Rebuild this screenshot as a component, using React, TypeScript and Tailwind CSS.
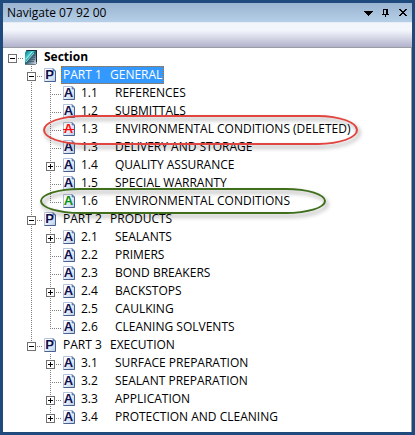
import { useState } from "react";
import clsx from "clsx";

type Kind = "section" | "part" | "article" | "deleted" | "added";

type TreeItem = {
	id: string;
	number?: string;
	title: string;
	kind: Kind;
	expandable?: boolean;
	children?: TreeItem[];
};

const article = (id: string, number: string, title: string, expandable = false, kind: Kind = "article"): TreeItem => ({
	id,
	number,
	title,
	kind,
	expandable,
});

const tree: TreeItem = {
	id: "section",
	title: "Section",
	kind: "section",
	expandable: true,
	children: [
		{
			id: "part-1",
			number: "PART 1",
			title: "GENERAL",
			kind: "part",
			expandable: true,
			children: [
				article("1-1", "1.1", "REFERENCES"),
				article("1-2", "1.2", "SUBMITTALS"),
				article("1-3-old", "1.3", "ENVIRONMENTAL CONDITIONS (DELETED)", false, "deleted"),
				article("1-3", "1.3", "DELIVERY AND STORAGE"),
				article("1-4", "1.4", "QUALITY ASSURANCE", true),
				article("1-5", "1.5", "SPECIAL WARRANTY"),
				article("1-6", "1.6", "ENVIRONMENTAL CONDITIONS", false, "added"),
			],
		},
		{
			id: "part-2",
			number: "PART 2",
			title: "PRODUCTS",
			kind: "part",
			expandable: true,
			children: [
				article("2-1", "2.1", "SEALANTS", true),
				article("2-2", "2.2", "PRIMERS"),
				article("2-3", "2.3", "BOND BREAKERS"),
				article("2-4", "2.4", "BACKSTOPS", true),
				article("2-5", "2.5", "CAULKING"),
				article("2-6", "2.6", "CLEANING SOLVENTS"),
			],
		},
		{
			id: "part-3",
			number: "PART 3",
			title: "EXECUTION",
			kind: "part",
			expandable: true,
			children: [
				article("3-1", "3.1", "SURFACE PREPARATION", true),
				article("3-2", "3.2", "SEALANT PREPARATION"),
				article("3-3", "3.3", "APPLICATION", true),
				article("3-4", "3.4", "PROTECTION AND CLEANING", true),
			],
		},
	],
};

// Vertical guide that runs past a row for an ancestor with more siblings
function Guide({ visible }: { visible: boolean }) {
	return (
		<svg width="19" height="18" className="shrink-0" shapeRendering="crispEdges" aria-hidden="true">
			{visible && <path d="M9.5 0V18" stroke="#808080" strokeDasharray="1 1" />}
		</svg>
	);
}

type BranchProps = { root: boolean; last: boolean; box?: "plus" | "minus" };

function Branch({ root, last, box }: BranchProps) {
	return (
		<svg width="22" height="18" className="block shrink-0" fill="none" shapeRendering="crispEdges" aria-hidden="true">
			{!root && <path d={last ? "M9.5 0V10" : "M9.5 0V18"} stroke="#808080" strokeDasharray="1 1" />}
			<path d="M9 10.5H21" stroke="#808080" strokeDasharray="1 1" />
			{box && (
				<>
					<rect x="5.5" y="6.5" width="8" height="8" fill="#fff" stroke="#707070" />
					<path d="M7 10.5H12" stroke="#000" />
					{box === "plus" && <path d="M9.5 8V13" stroke="#000" />}
				</>
			)}
		</svg>
	);
}

function SectionIcon() {
	return (
		<svg width="13" height="16" viewBox="0 0 13 16" className="shrink-0" aria-hidden="true">
			<defs>
				<linearGradient id="section-cover" x1="0" y1="0" x2="1" y2="1">
					<stop offset="0.1" stopColor="#0f7f8c" />
					<stop offset="0.38" stopColor="#4fd8d8" />
					<stop offset="0.5" stopColor="#1f5f74" />
					<stop offset="0.75" stopColor="#8fa3b4" />
					<stop offset="1" stopColor="#e3eaf1" />
				</linearGradient>
			</defs>
			<path d="M1.5 1H12V14L10 15H0V4Z" fill="url(#section-cover)" />
			<path d="M1.5 1.5H11.5V13.5" fill="none" stroke="#1c2a33" />
			<path d="M0 15.5H10.5L12 14" fill="none" stroke="#6c7884" />
			<path d="M7 6.5H10M5 8.5H10M4 10.5H10M2 12.5H9" stroke="#43586a" strokeWidth="0.8" />
			<path d="M1 10L7 3M1 13L9 4" stroke="#b4f2ee" strokeWidth="0.8" />
		</svg>
	);
}

const letterColors: Record<Kind, string> = {
	section: "#10104f",
	part: "#10104f",
	article: "#10104f",
	deleted: "#ff0c0c",
	added: "#0a9014",
};

function PageIcon({ kind }: { kind: Kind }) {
	return (
		<svg width="13" height="18" viewBox="0 -1 13 18" className="shrink-0 overflow-visible" aria-hidden="true">
			<defs>
				<linearGradient id={`page-${kind}`} x1="0" y1="0" x2="1" y2="1">
					<stop offset="0.3" stopColor="#fff" />
					<stop offset="1" stopColor="#b4c8ea" />
				</linearGradient>
			</defs>
			<path d="M.5 1.5H9L11.5 4V14.5H.5Z" fill={`url(#page-${kind})`} stroke="#b3c3df" />
			<path d="M11.5 4V14.5H.5" fill="none" stroke="#49618f" />
			<path d="M9 1.5V4H11.5Z" fill="#6d88b8" stroke="#5570a0" strokeWidth="0.6" />
			<text
				x="5.5"
				y="12"
				textAnchor="middle"
				fontSize="13"
				fontFamily="Liberation Sans, sans-serif"
				fontWeight={700}
				fill={letterColors[kind]}
			>
				{kind === "part" ? "P" : "A"}
			</text>
			{kind === "deleted" && <path d="M0 8.5H11" stroke="#ff0c0c" />}
		</svg>
	);
}

type RowProps = {
	item: TreeItem;
	guides: boolean[];
	last: boolean;
	selected: string;
	onSelect: (id: string) => void;
};

function TreeRow({ item, guides, last, selected, onSelect }: RowProps) {
	const [open, setOpen] = useState(true);
	const root = item.kind === "section";
	const showChildren = open && !!item.children;
	const active = selected === item.id;

	return (
		<li role="treeitem" aria-selected={active}>
			<div className="relative flex h-[18px] items-center">
				{guides.map((visible, i) => (
					<Guide key={i} visible={visible} />
				))}
				{item.expandable ? (
					<button
						type="button"
						aria-label={`${showChildren ? "Collapse" : "Expand"} ${item.title}`}
						onClick={() => setOpen(!open)}
					>
						<Branch root={root} last={last} box={showChildren ? "minus" : "plus"} />
					</button>
				) : (
					<Branch root={root} last={last} />
				)}
				{root ? <SectionIcon /> : <PageIcon kind={item.kind} />}
				<button
					type="button"
					onClick={() => onSelect(item.id)}
					className={clsx(
						"flex h-[18px] items-center border px-px whitespace-nowrap",
						item.kind === "part" || root ? "ml-1" : "ml-[3px]",
						active ? "border-dotted border-[#cc6600] bg-[#3399ff] text-white" : "border-transparent",
						root && "font-bold",
					)}
				>
					{item.number && (
						<span className={clsx("text-left", item.kind === "part" ? "w-[47px]" : "w-[34px]")}>{item.number}</span>
					)}
					<span>{item.title}</span>
				</button>
				{item.kind === "deleted" && (
					<span className="pointer-events-none absolute -top-[5px] left-10 z-10 h-[30px] w-[315px] rounded-[40px/15px] border-2 border-[#e2453f] drop-shadow-[2px_3px_2px_rgba(0,0,0,0.4)]" />
				)}
				{item.kind === "added" && (
					<span className="pointer-events-none absolute -top-1 left-[37px] z-10 h-[26px] w-[286px] rounded-[40px/13px] border-2 border-[#3f6f1c] drop-shadow-[2px_3px_2px_rgba(0,0,0,0.4)]" />
				)}
			</div>
			{showChildren && (
				<ul role="group">
					{item.children!.map((child, i) => (
						<TreeRow
							key={child.id}
							item={child}
							guides={[...guides, !root && !last]}
							last={i === item.children!.length - 1}
							selected={selected}
							onSelect={onSelect}
						/>
					))}
				</ul>
			)}
		</li>
	);
}

export default function App() {
	const [selected, setSelected] = useState("part-1");

	return (
		<div className="flex min-h-screen flex-col border-3 border-[#1f4a7d] bg-white font-['Open_Sans',sans-serif] text-[12px] leading-4 text-black">
			<header className="flex h-[19px] items-center justify-between bg-linear-to-b from-[#9ab4d1] to-[#b5cfe8] pr-1 pl-1">
				<h1>Navigate 07 92 00</h1>
				<div className="flex items-center gap-1.5">
					<button type="button" aria-label="Window position">
						<svg width="11" height="11" shapeRendering="crispEdges">
							<path d="M1 4H10V5H9V6H8V7H7V8H6V9H5V8H4V7H3V6H2V5H1Z" />
						</svg>
					</button>
					<button type="button" aria-label="Auto hide">
						<svg width="11" height="11" shapeRendering="crispEdges">
							<path d="M3 2H8V7H9V8H6V10H5V8H2V7H3ZM4 3V7H6V3Z" fillRule="evenodd" />
						</svg>
					</button>
					<button type="button" aria-label="Close">
						<svg width="11" height="11" shapeRendering="crispEdges">
							<path d="M2 2H4V3H5V4H7V3H8V2H10V3H9V4H8V5H7V6H8V7H9V8H10V9H8V8H7V7H5V8H4V9H2V8H3V7H4V6H5V5H4V4H3V3H2Z" />
						</svg>
					</button>
				</div>
			</header>
			<div className="h-[26px] border-t border-b border-t-[#e8ecf6] border-b-[#9c9ca4] bg-linear-to-b from-[#f3f7fc] from-30% to-[#b2b2cc]" />
			<ul role="tree" aria-label="Section outline" className="flex-1 border-r border-[#9c9c9c]">
				<TreeRow item={tree} guides={[]} last selected={selected} onSelect={setSelected} />
			</ul>
		</div>
	);
}
